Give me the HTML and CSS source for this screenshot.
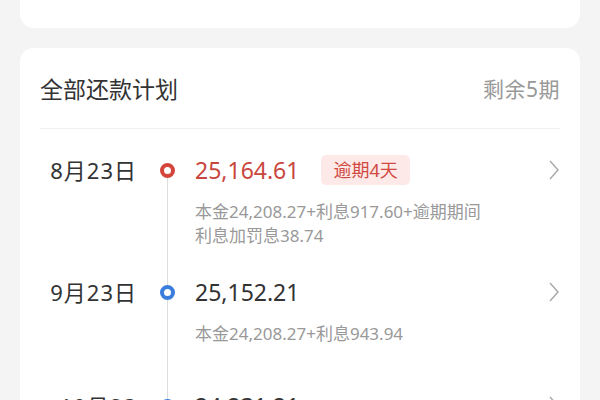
FILE: index.html
```html
<!DOCTYPE html>
<html lang="zh-CN">
<head>
    <meta charset="UTF-8">
    <meta name="viewport" content="width=device-width, initial-scale=1.0">
    <title>全部还款计划</title>
    <link rel="stylesheet" href="styles.css">
</head>
<body>
    <div class="card top-card"></div>

    <div class="card plan">
        <div class="plan-header">
            <h2>全部还款计划</h2>
            <span class="remain">剩余5期</span>
        </div>

        <div class="plan-list">
            <div class="plan-row">
                <div class="date">8月23日</div>
                <div class="track"><span class="dot dot-overdue"></span></div>
                <div class="info">
                    <div class="amount-line">
                        <span class="amount overdue">25,164.61</span>
                        <span class="badge">逾期4天</span>
                    </div>
                    <div class="detail">本金24,208.27+利息917.60+逾期期间<br>利息加罚息38.74</div>
                </div>
                <div class="arrow">
                    <svg width="12" height="20" viewBox="0 0 12 20"><polyline points="2,1 10,10 2,19" fill="none" stroke="#aaa" stroke-width="1.5"/></svg>
                </div>
            </div>

            <div class="plan-row">
                <div class="date">9月23日</div>
                <div class="track"><span class="dot"></span></div>
                <div class="info">
                    <div class="amount-line">
                        <span class="amount">25,152.21</span>
                    </div>
                    <div class="detail">本金24,208.27+利息943.94</div>
                </div>
                <div class="arrow">
                    <svg width="12" height="20" viewBox="0 0 12 20"><polyline points="2,1 10,10 2,19" fill="none" stroke="#aaa" stroke-width="1.5"/></svg>
                </div>
            </div>

            <div class="plan-row">
                <div class="date">10月23日</div>
                <div class="track"><span class="dot"></span></div>
                <div class="info">
                    <div class="amount-line">
                        <span class="amount">24,231.21</span>
                    </div>
                    <div class="detail">本金24,208.27+利息23.94</div>
                </div>
                <div class="arrow">
                    <svg width="12" height="20" viewBox="0 0 12 20"><polyline points="2,1 10,10 2,19" fill="none" stroke="#aaa" stroke-width="1.5"/></svg>
                </div>
            </div>
        </div>
    </div>
</body>
</html>
```

FILE: styles.css
```css
html, body {
    height: 100%;
    overflow: hidden;
}

body {
    margin: 0;
    padding: 0 20px;
    background: #f4f4f4;
    font-family: "Noto Sans", "Noto Sans CJK SC", sans-serif;
    color: #333;
}

.card {
    background: white;
    border-radius: 14px;
}

.top-card {
    height: 28px;
    border-radius: 0 0 14px 14px;
}

.plan {
    margin-top: 20px;
    padding: 0 20px;
}

.plan-header {
    height: 80px;
    display: flex;
    align-items: center;
    justify-content: space-between;
    border-bottom: 1px solid #f0f0f0;
}

.plan-header h2 {
    margin: 0;
    font-size: 23px;
    font-weight: normal;
    color: #333;
}

.remain {
    font-size: 21px;
    letter-spacing: 0.5px;
    color: #999;
}

.plan-list {
    padding-top: 19px;
}

.plan-row {
    display: grid;
    grid-template-columns: 97px 58px 1fr 20px;
    min-height: 114px;
    padding-bottom: 22px;
    box-sizing: border-box;
}

.date {
    text-align: right;
    font-size: 22px;
    letter-spacing: 1px;
    line-height: 44px;
    height: 44px;
    color: #333;
}

.track {
    position: relative;
    margin-bottom: -22px;
}

.track::before,
.track::after {
    content: "";
    position: absolute;
    left: 30px;
    width: 1px;
    background: #ddd;
}

.track::before {
    top: 0;
    height: 22px;
}

.track::after {
    top: 22px;
    bottom: 0;
}

.plan-row:first-child .track::before {
    display: none;
}

.dot {
    position: absolute;
    z-index: 1;
    left: 23px;
    top: 15px;
    width: 15px;
    height: 15px;
    box-sizing: border-box;
    border-radius: 50%;
    border: 4px solid #3b7ddd;
    background: white;
}

.dot-overdue {
    border-color: #d4453c;
}

.amount-line {
    display: flex;
    align-items: center;
    height: 44px;
}

.amount {
    font-size: 23px;
    color: #333;
}

.amount.overdue {
    color: #c9463e;
}

.badge {
    margin-left: 22px;
    height: 30px;
    line-height: 30px;
    padding: 0 12px;
    border-radius: 5px;
    background: #fde9e8;
    color: #d04a42;
    font-size: 18px;
}

.detail {
    margin-top: 8px;
    font-size: 17px;
    line-height: 24px;
    color: #999;
}

.arrow {
    height: 44px;
    display: flex;
    align-items: center;
    justify-content: flex-end;
}
```
